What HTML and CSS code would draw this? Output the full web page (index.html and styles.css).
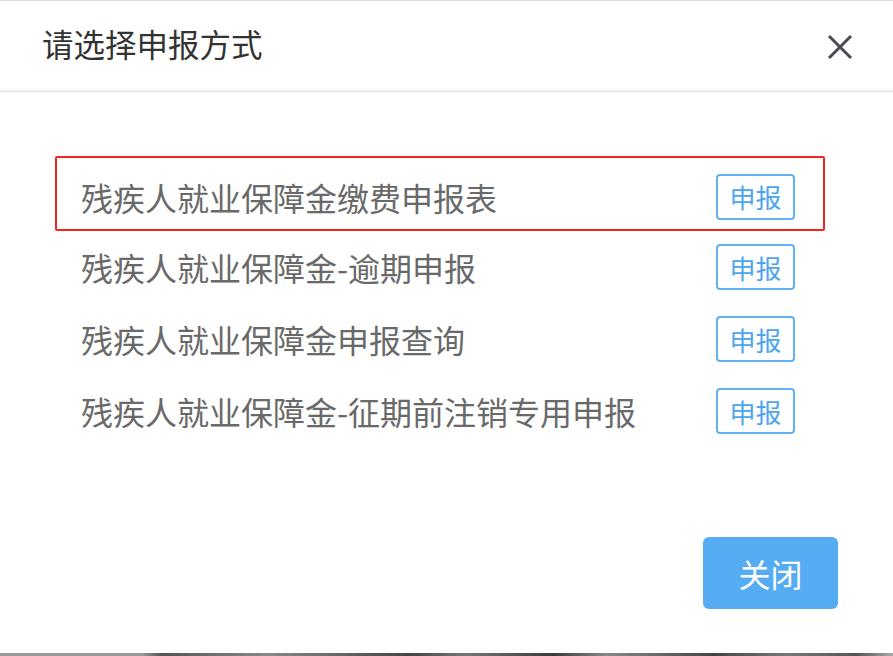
FILE: index.html
```html
<!DOCTYPE html>
<html>
  <head>
    <meta charset="utf-8" />
    <meta name="viewport" content="width=device-width, initial-scale=1.0" />
    <title>请选择申报方式</title>
    <link rel="stylesheet" href="styles.css">
  </head>
  <body>
    <div class="dialog-head">
      <span class="dialog-title">请选择申报方式</span>
      <svg class="dialog-close" width="26" height="26" viewBox="0 0 26 26">
        <path d="M2 2 L24 24 M24 2 L2 24" stroke="#4a4a55" stroke-width="3" fill="none" />
      </svg>
    </div>

    <div class="report-list">
      <div class="report-row active">
        <span class="report-name">残疾人就业保障金缴费申报表</span>
        <span class="report-btn">申报</span>
      </div>
      <div class="report-row">
        <span class="report-name">残疾人就业保障金-逾期申报</span>
        <span class="report-btn">申报</span>
      </div>
      <div class="report-row">
        <span class="report-name">残疾人就业保障金申报查询</span>
        <span class="report-btn">申报</span>
      </div>
      <div class="report-row">
        <span class="report-name">残疾人就业保障金-征期前注销专用申报</span>
        <span class="report-btn">申报</span>
      </div>
    </div>

    <div class="dialog-foot">
      <span class="close-btn">关闭</span>
    </div>
    <div class="edge"></div>
  </body>
</html>
```

FILE: styles.css
```css
html,
body {
  margin: 0;
  padding: 0;
  background: #fff;
}

body {
  height: 656px;
  display: flex;
  flex-direction: column;
  box-sizing: border-box;
  border-top: 1px solid #dcdcdc;
  font-family: "Noto Sans CJK SC", "Microsoft YaHei", sans-serif;
  overflow: hidden;
}

.dialog-head {
  height: 89px;
  display: flex;
  align-items: center;
  justify-content: space-between;
  padding: 0 40px 0 42px;
  border-bottom: 2px solid #ececec;
  box-shadow: 0 1px 1px #f6f6f6;
}

.dialog-title {
  font-size: 31.5px;
  color: #333;
  margin-top: -6px;
}

.dialog-close {
  display: block;
  margin-top: 2px;
}

.report-list {
  padding: 64px 68px 0 55px;
}

.report-row {
  height: 72px;
  box-sizing: border-box;
  border: 2px solid transparent;
  display: flex;
  align-items: center;
  justify-content: space-between;
  padding: 0 28px 0 24px;
}

.report-row.active {
  height: 75px;
  padding-top: 6px;
  border-color: #f5231f;
  border-radius: 2px;
}

.report-name {
  font-size: 32px;
  color: #696969;
  white-space: nowrap;
}

.report-btn {
  width: 79px;
  height: 46px;
  box-sizing: border-box;
  border: 2px solid #62b0f5;
  border-radius: 4px;
  color: #4ca4ef;
  font-size: 26px;
  display: flex;
  align-items: center;
  justify-content: center;
}

.dialog-foot {
  margin-top: auto;
  display: flex;
  justify-content: flex-end;
  padding: 0 55px 44px 0;
}

.close-btn {
  width: 135px;
  height: 72px;
  border-radius: 6px;
  background: #55acf2;
  color: #fff;
  font-size: 32px;
  display: flex;
  align-items: center;
  justify-content: center;
}

.edge {
  height: 3px;
  background: linear-gradient(90deg, #999 0, #999 16%, #555 18%, #888 30%, #444 46%, #777 52%, #3c3c3c 62%, #888 68%, #444 80%, #777 88%, #555 96%, #aaa 100%);
}
```
